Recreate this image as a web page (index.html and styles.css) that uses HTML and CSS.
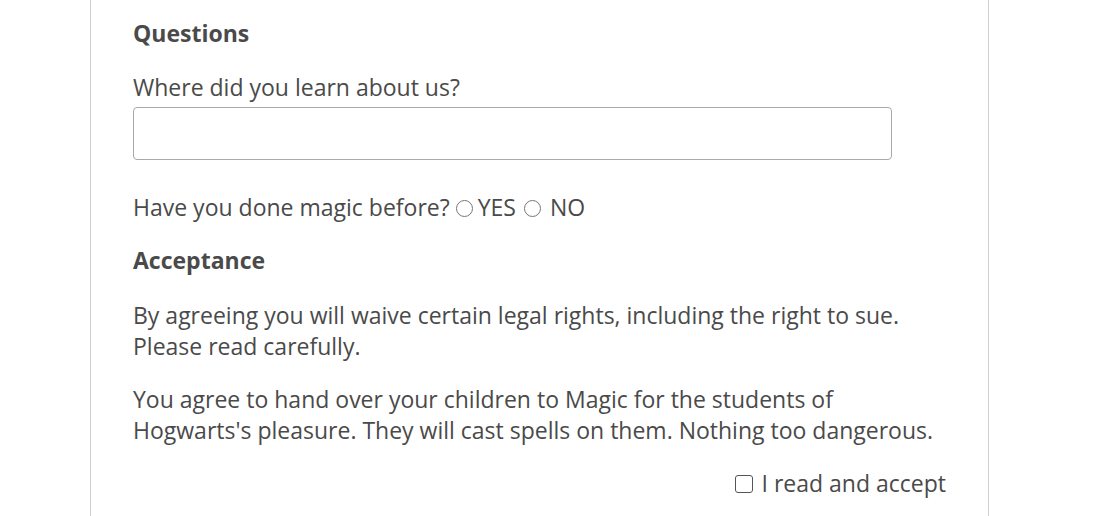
FILE: index.html
```html
<!DOCTYPE html>
<html>
<head>
<meta charset="utf-8">
<link rel="stylesheet" href="styles.css">
</head>
<body>
<main class="page">
  <form class="form">
    <h3 class="section-title">Questions</h3>
    <div class="field">
      <label class="label" for="learn">Where did you learn about us?</label>
      <input class="text-input" id="learn" type="text">
    </div>
    <p class="line magic">Have you done magic before?<span class="radio radio-yes"></span>YES<span class="radio radio-no"></span>NO</p>
    <h3 class="section-title">Acceptance</h3>
    <p class="line first-para">By agreeing you will waive certain legal rights, including the right to sue. Please read carefully.</p>
    <p class="line">You agree to hand over your children to Magic for the students of Hogwarts's pleasure. They will cast spells on them. Nothing too dangerous.</p>
    <div class="accept"><span class="checkbox"></span>I read and accept</div>
  </form>
</main>
</body>
</html>
```

FILE: styles.css
```css
html, body {
  margin: 0;
  padding: 0;
  background: #fff;
}
body {
  font-family: "Open Sans", "Noto Sans", sans-serif;
  color: #4a4a4a;
  font-size: 23px;
  line-height: 31px;
}
.page {
  width: 899px;
  margin-left: 90px;
  padding: 18px 42px 0 42px;
  border-left: 1px solid #d0d0d0;
  border-right: 1px solid #d0d0d0;
  min-height: 516px;
  box-sizing: border-box;
}
.form {
  display: flex;
  flex-direction: column;
  gap: 22px;
}
.section-title {
  margin: 0;
  font-size: 23px;
  font-weight: 700;
  line-height: 31px;
}
.field {
  display: flex;
  flex-direction: column;
  gap: 4px;
  margin-top: 1px;
}
.label {
  display: block;
}
.text-input {
  width: 759px;
  height: 53px;
  box-sizing: border-box;
  border: 1px solid #a9a9a9;
  border-radius: 4px;
  margin: 0;
  padding: 0 10px;
  font: inherit;
}
.line {
  margin: 0;
}
.magic {
  margin-top: 10px;
}
.first-para {
  margin-top: 2px;
}
.radio {
  display: inline-block;
  width: 17px;
  height: 17px;
  border: 1px solid #767676;
  border-radius: 50%;
  box-sizing: border-box;
  vertical-align: -1px;
}
.radio-yes {
  margin: 0 5px 0 6px;
}
.radio-no {
  margin: 0 9px 0 8px;
}
.accept {
  align-self: flex-end;
  display: flex;
  align-items: center;
  margin-top: 0;
}
.checkbox {
  display: inline-block;
  width: 18px;
  height: 18px;
  border: 1px solid #555;
  border-radius: 3px;
  box-sizing: border-box;
  margin-right: 9px;
}
```
